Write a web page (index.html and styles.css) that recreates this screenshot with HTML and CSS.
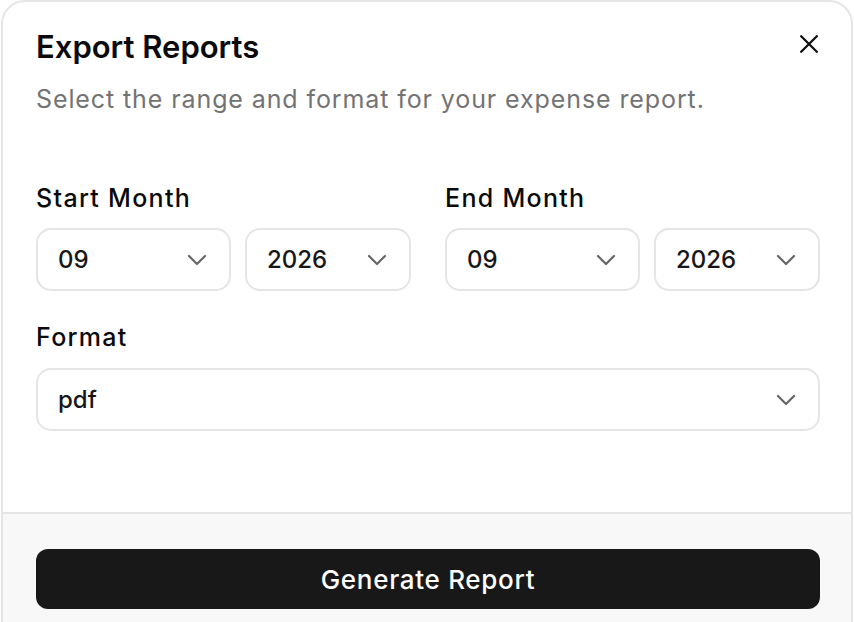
FILE: index.html
```html
<!DOCTYPE html>
<html lang="en">
<head>
<meta charset="utf-8">
<title>Export Reports</title>
<link rel="stylesheet" href="styles.css">
</head>
<body>
<div class="dialog">
  <div class="body">
    <div class="header">
      <h2 class="title">Export Reports</h2>
      <button class="close" aria-label="Close">
        <svg width="18" height="18" viewBox="0 0 18 18"><path d="M1.2 1.2 16.8 16.8M16.8 1.2 1.2 16.8" stroke="#111" stroke-width="2.3" stroke-linecap="round" fill="none"/></svg>
      </button>
    </div>
    <p class="subtitle">Select the range and format for your expense report.</p>

    <div class="range">
      <div class="group">
        <div class="label">Start Month</div>
        <div class="pair">
          <div class="select"><span>09</span><svg class="chev" width="20" height="12" viewBox="0 0 20 12"><path d="M2 2 10 10 18 2" stroke="#666" stroke-width="2.2" stroke-linecap="round" stroke-linejoin="round" fill="none"/></svg></div>
          <div class="select"><span>2026</span><svg class="chev" width="20" height="12" viewBox="0 0 20 12"><path d="M2 2 10 10 18 2" stroke="#666" stroke-width="2.2" stroke-linecap="round" stroke-linejoin="round" fill="none"/></svg></div>
        </div>
      </div>
      <div class="group">
        <div class="label">End Month</div>
        <div class="pair">
          <div class="select"><span>09</span><svg class="chev" width="20" height="12" viewBox="0 0 20 12"><path d="M2 2 10 10 18 2" stroke="#666" stroke-width="2.2" stroke-linecap="round" stroke-linejoin="round" fill="none"/></svg></div>
          <div class="select"><span>2026</span><svg class="chev" width="20" height="12" viewBox="0 0 20 12"><path d="M2 2 10 10 18 2" stroke="#666" stroke-width="2.2" stroke-linecap="round" stroke-linejoin="round" fill="none"/></svg></div>
        </div>
      </div>
    </div>

    <div class="group format">
      <div class="label">Format</div>
      <div class="select"><span>pdf</span><svg class="chev" width="20" height="12" viewBox="0 0 20 12"><path d="M2 2 10 10 18 2" stroke="#666" stroke-width="2.2" stroke-linecap="round" stroke-linejoin="round" fill="none"/></svg></div>
    </div>
  </div>
  <div class="footer">
    <button class="primary">Generate Report</button>
  </div>
</div>
</body>
</html>
```
FILE: styles.css
```css
* { box-sizing: border-box; }
html, body { margin: 0; padding: 0; background: #fff; }
body {
  font-family: Inter, "Noto Sans", "Liberation Sans", sans-serif;
  color: #0a0a0a;
  overflow: hidden;
}
.dialog {
  margin-left: 1px;
  width: 852px;
  height: 640px;
  border: 2px solid #e5e5e5;
  border-radius: 24px 24px 0 0;
  background: #fff;
  overflow: hidden;
  display: flex;
  flex-direction: column;
}
.body {
  padding: 27px 31px 81px 33px;
}
.header {
  display: flex;
  justify-content: space-between;
  align-items: flex-start;
}
.title {
  margin: 0;
  font-size: 31px;
  line-height: 36px;
  font-weight: 600;
  letter-spacing: 0;
}
.close {
  border: 0;
  background: none;
  padding: 0;
  margin: 6px 2px 0 0;
  width: 18px;
  height: 18px;
  display: flex;
}
.subtitle {
  margin: 18px 0 0;
  font-size: 25px;
  line-height: 32px;
  letter-spacing: 0.9px;
  color: #737373;
}
.range {
  margin-top: 67px;
  display: grid;
  grid-template-columns: 1fr 1fr;
  column-gap: 34px;
}
.label {
  font-size: 25px;
  line-height: 32px;
  font-weight: 500;
  letter-spacing: 1.3px;
  margin-bottom: 14px;
}
.pair {
  display: grid;
  grid-template-columns: 195fr 166fr;
  column-gap: 14px;
}
.select {
  height: 63px;
  border: 2px solid #e5e5e5;
  border-radius: 15px;
  display: flex;
  align-items: center;
  justify-content: space-between;
  padding: 0 22px 0 20px;
  font-size: 24px;
  font-weight: 500;
  color: #171717;
}
.chev { flex: none; }
.format { margin-top: 30px; }
.format .label { margin-bottom: 15px; }
.footer {
  flex: 1;
  background: #f8f8f8;
  border-top: 2px solid #e5e5e5;
  padding: 35px 31px 0 33px;
}
.primary {
  width: 100%;
  height: 60px;
  border: 0;
  border-radius: 12px;
  background: #181818;
  color: #fff;
  font-family: inherit;
  font-size: 26px;
  font-weight: 500;
  letter-spacing: 0.7px;
  display: block;
}
```
